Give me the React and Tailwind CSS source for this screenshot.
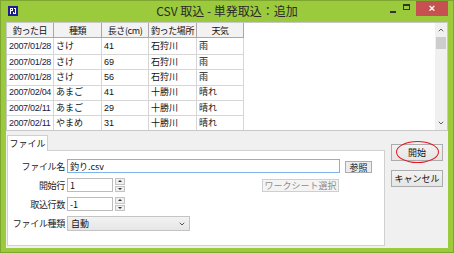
import { ChevronUp, ChevronDown } from "lucide-react";

const rows = [
  ["2007/01/28", "さけ", "41", "石狩川", "雨"],
  ["2007/01/28", "さけ", "69", "石狩川", "雨"],
  ["2007/01/28", "さけ", "56", "石狩川", "雨"],
  ["2007/02/04", "あまご", "41", "十勝川", "晴れ"],
  ["2007/02/11", "あまご", "29", "十勝川", "晴れ"],
  ["2007/02/11", "やまめ", "31", "十勝川", "晴れ"],
  ["2007/02/18", "やまめ", "33", "十勝川", "晴れ"],
];

const headers = ["釣った日", "種類", "長さ(cm)", "釣った場所", "天気"];
const widths = ["w-[47px]", "w-[48px]", "w-[47px]", "w-[48px]", "w-[47px]"];

const AppIcon = () => (
  <svg width="10" height="10" viewBox="0 0 10 10">
    <rect width="10" height="10" fill="#1b1f8f" />
    <path d="M2 2h3v3H3v3H2z M3 3v1h1V3z" fill="#fff" />
    <path d="M6 2h2v6H5V6h1v1h1V3H6z" fill="#fff" />
  </svg>
);

const Spinner = () => (
  <div className="ml-[2px] flex h-[14px] w-[10px] flex-col gap-[1px]">
    <div className="flex flex-1 items-center justify-center border border-[#c4c4c4] bg-[#efefef]">
      <div className="h-0 w-0 border-x-[2px] border-b-[2px] border-x-transparent border-b-[#333]" />
    </div>
    <div className="flex flex-1 items-center justify-center border border-[#c4c4c4] bg-[#efefef]">
      <div className="h-0 w-0 border-x-[2px] border-t-[2px] border-x-transparent border-t-[#333]" />
    </div>
  </div>
);

const Label = ({ children }) => (
  <div className="w-[57px] text-right text-[9px] leading-none tracking-[-0.3px] text-[#222]">
    {children}
  </div>
);

const App = () => {
  return (
    <div
      className="flex h-[253px] w-[454px] flex-col border border-[#7ea52f] bg-[#9bca3d] text-[#111]"
      style={{ fontFamily: '"Liberation Sans", "Noto Sans CJK JP", sans-serif' }}
    >
      {/* Title bar */}
      <div className="grid h-[21px] grid-cols-[1fr_auto_1fr] items-start">
        <div className="pl-[7px] pt-[5px]">
          <AppIcon />
        </div>
        <div className="pt-[3px] text-[12px] leading-[14px] text-[#2a2a2a]" style={{ fontFamily: '"Noto Sans CJK JP", sans-serif' }}>
          CSV 取込 - 単発取込：追加
        </div>
        <div className="flex justify-end">
          <div className="flex h-[9px] w-[19px] items-end justify-center mt-[2px]">
            <div className="mb-[-1px] h-[2px] w-[6px] bg-[#333]" />
          </div>
          <div className="ml-[1px] mt-[3px] h-[6px] w-[7px] border border-t-2 border-[#333]" />
          <div className="ml-[6px] flex h-[15px] w-[32px] items-center justify-center bg-[#c75050] text-[11px] font-bold leading-none text-white">
            ×
          </div>
          <div className="w-[5px]" />
        </div>
      </div>

      {/* Client area */}
      <div className="mx-[5px] flex flex-1 flex-col">
        {/* List */}
        <div className="flex h-[109px] border border-[#c8c8c8] bg-white">
          <div className="flex-1 overflow-hidden">
            <div className="flex h-[15px]">
              {headers.map((h, i) => (
                <div
                  key={h}
                  className={`${widths[i]} flex items-center justify-center border-b border-r border-[#a8a8a8] bg-[#f2f2f2] text-[9px] leading-none tracking-[-0.4px]`}
                  style={{ fontFamily: '"Noto Sans CJK JP", sans-serif' }}
                >
                  {h}
                </div>
              ))}
            </div>
            {rows.map((r, ri) => (
              <div key={ri} className={`flex ${ri === 0 ? "h-[17px]" : "h-[15.3px]"}`}>
                {r.map((c, ci) => (
                  <div
                    key={ci}
                    className={`${widths[ci]} flex items-center overflow-hidden whitespace-nowrap border-b border-r border-[#d6d6d6] pl-[2px] text-[9px] leading-none ${ci === 0 ? "text-[#1a1a40] tracking-[-0.3px]" : ""}`}
                  >
                    {c}
                  </div>
                ))}
              </div>
            ))}
          </div>
          {/* Scrollbar */}
          <div className="flex w-[12px] flex-col bg-[#f0f0f0]">
            <div className="flex h-[14px] items-center justify-center">
              <ChevronUp size={8} strokeWidth={3} color="#606060" />
            </div>
            <div className="mx-[1px] h-[12px] bg-[#cdcdcd]" />
            <div className="flex-1" />
            <div className="flex h-[14px] items-center justify-center">
              <ChevronDown size={8} strokeWidth={3} color="#606060" />
            </div>
          </div>
        </div>

        {/* Bottom panel */}
        <div className="flex flex-1 bg-[#f0f0f0] pb-[2px]" style={{ fontFamily: '"Noto Sans CJK JP", sans-serif' }}>
          {/* Tab control */}
          <div className="ml-[1px] mt-[4px] flex w-[378px] flex-col">
            <div className="flex">
              <div className="relative z-10 -mb-[1px] flex h-[16px] w-[41px] items-center justify-center border border-b-0 border-[#d0d0d0] bg-white text-[9px] leading-none">
                ファイル
              </div>
            </div>
            <div className="flex flex-1 flex-col gap-[5px] border border-[#d0d0d0] bg-white pt-[8px]">
              <div className="flex h-[14px] items-center">
                <Label>ファイル名</Label>
                <div className="ml-[2px] flex h-[14px] w-[273px] items-center border border-[#7eb4ea] bg-white pl-[2px] text-[9px] leading-none">
                  釣り.csv
                </div>
                <div className="ml-[5px] mt-[2px] flex h-[12px] w-[27px] items-center justify-center border border-[#acacac] bg-[#ececec] text-[9px] leading-none">
                  参照
                </div>
              </div>
              <div className="flex h-[14px] items-center">
                <Label>開始行</Label>
                <div className="ml-[2px] flex h-[14px] w-[46px] items-center border border-[#bcbcbc] bg-white pl-[2px] text-[9px] leading-none">
                  1
                </div>
                <Spinner />
                <div className="ml-[137px] mt-[1px] flex h-[13px] w-[77px] items-center justify-center border border-[#cfcfcf] bg-[#f4f4f4] text-[9px] leading-none text-[#8d8d8d]">
                  ワークシート選択
                </div>
              </div>
              <div className="flex h-[14px] items-center">
                <Label>取込行数</Label>
                <div className="ml-[2px] flex h-[14px] w-[46px] items-center border border-[#bcbcbc] bg-white pl-[2px] text-[9px] leading-none">
                  -1
                </div>
                <Spinner />
              </div>
              <div className="flex h-[15px] items-center">
                <Label>ファイル種類</Label>
                <div className="ml-[2px] flex h-[15px] w-[123px] items-center justify-between border border-[#c4c4c4] bg-gradient-to-b from-[#f2f2f2] to-[#e6e6e6] px-[3px] text-[9px] leading-none">
                  <span>自動</span>
                  <ChevronDown size={8} strokeWidth={3} color="#555" />
                </div>
              </div>
            </div>
          </div>

          {/* Buttons */}
          <div className="ml-[6px] flex flex-col gap-[9px] pt-[13px]">
            <div className="relative flex h-[17px] w-[52px] items-center justify-center border border-[#acacac] bg-gradient-to-b from-[#f2f2f2] to-[#e5e5e5] text-[9px] leading-none">
              開始
              <div className="absolute left-[4px] top-[-4px] h-[22px] w-[43px] rounded-[50%] border-[1.5px] border-[#e8141b]" />
            </div>
            <div className="flex h-[17px] w-[52px] items-center justify-center border border-[#acacac] bg-gradient-to-b from-[#f2f2f2] to-[#e5e5e5] text-[9px] leading-none">
              キャンセル
            </div>
          </div>
        </div>
      </div>
      <div className="h-[4px]" />
    </div>
  );
};

export default App;
